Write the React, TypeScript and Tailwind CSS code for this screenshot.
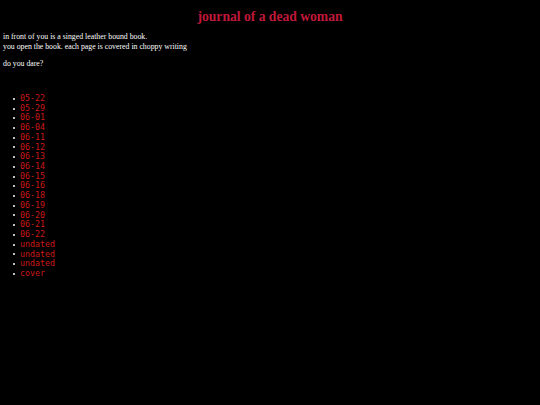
const entries = [
  '05-22', '05-29', '06-01', '06-04', '06-11', '06-12', '06-13', '06-14', '06-15',
  '06-16', '06-18', '06-19', '06-20', '06-21', '06-22', 'undated', 'undated', 'undated', 'cover',
];

export default function App() {
  return (
    <div className="min-h-[405px] bg-black px-[3px] pt-[9px] font-['Liberation_Serif',serif] text-white">
      <h1 className="text-center text-[13.6px] font-bold leading-[16px] text-[#c0183a]">journal of a dead woman</h1>

      <div className="mt-[7px] text-[7.8px] leading-[10px]">
        <p>in front of you is a singed leather bound book.</p>
        <p>you open the book. each page is covered in choppy writing</p>
        <p className="mt-[7px]">do you dare?</p>
      </div>

      <ul className="mt-[25px] pl-[10px] font-['DejaVu_Sans_Mono',monospace] text-[8.3px] leading-[9.72px] text-[#cc1818]">
        {entries.map((e, i) => (
          <li key={i} className="flex items-center">
            <span className="mr-[5px] h-[2px] w-[2px] rounded-full bg-white" />
            {e}
          </li>
        ))}
      </ul>
    </div>
  );
}
